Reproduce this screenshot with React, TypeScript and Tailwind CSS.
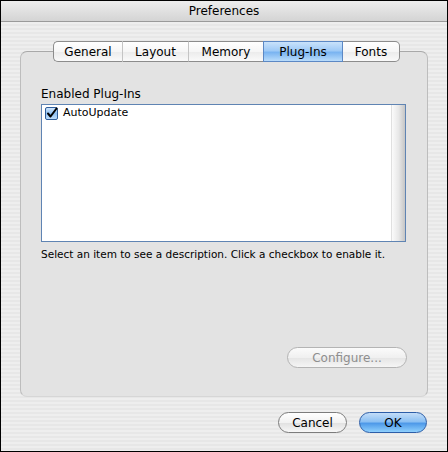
import React from "react";

const font = { fontFamily: '"DejaVu Sans", "Liberation Sans", sans-serif' };

function Tab({ label, w, first, last, active }: { label: string; w: string; first?: boolean; last?: boolean; active?: boolean }) {
  const base = "flex items-center justify-center h-full text-[12px] text-black border-y border-[#8c8c8c] " + w;
  const bg = active
    ? "bg-[linear-gradient(to_bottom,#c9e2fb_0%,#9fcaf6_45%,#7ab4f1_55%,#b9dcfb_100%)] border-y-[#5c88c4]"
    : "bg-[linear-gradient(to_bottom,#ffffff_0%,#f6f6f6_50%,#ececec_55%,#fafafa_100%)]";
  const edges = first
    ? " border-l rounded-l-[5px] border-r border-r-[#c4c4c4]"
    : last
    ? " border-r rounded-r-[5px]"
    : active
    ? " border-r border-r-[#5c88c4] border-l border-l-[#5c88c4] -ml-px"
    : " border-r border-r-[#c4c4c4]";
  return <div className={base + " " + bg + edges}>{label}</div>;
}

function Checkbox() {
  return (
    <svg width="13" height="13" viewBox="0 0 13 13">
      <defs>
        <linearGradient id="cb" x1="0" y1="0" x2="0" y2="1">
          <stop offset="0" stopColor="#d6e9fc" />
          <stop offset="0.5" stopColor="#8fc0f3" />
          <stop offset="1" stopColor="#c2e0fc" />
        </linearGradient>
      </defs>
      <rect x="0.5" y="0.5" width="12" height="12" rx="1.5" fill="url(#cb)" stroke="#2f5d9a" />
      <path d="M3 6.5 L5.5 9.5 L11.5 1.5" fill="none" stroke="#000" strokeWidth="2" strokeLinecap="round" strokeLinejoin="round" />
    </svg>
  );
}

export default function App() {
  return (
    <div className="w-[448px] h-[452px] border border-black flex flex-col overflow-hidden" style={font}>
      <div className="h-[21px] shrink-0 flex items-center justify-center text-[12px] text-black bg-[linear-gradient(to_bottom,#ededed,#d4d4d4)] border-b border-[#9a9a9a]">
        Preferences
      </div>
      <div className="flex-1 flex flex-col px-[19px] pt-[19px] bg-[repeating-linear-gradient(to_bottom,#eeeeee_0px,#eeeeee_2px,#e7e7e7_2px,#e7e7e7_4px)]">
        <div className="relative z-10 h-[21px] flex justify-center pl-[5px]">
          <Tab label="General" w="w-[70px]" first />
          <Tab label="Layout" w="w-[66px]" />
          <Tab label="Memory" w="w-[75px]" />
          <Tab label="Plug-Ins" w="w-[80px]" active />
          <Tab label="Fonts" w="w-[57px]" last />
        </div>
        <div className="-mt-[11px] h-[346px] rounded-[7px] border border-[#a9a9a9] border-b-[#d6d6d6] border-x-[#bdbdbd] bg-[#e3e3e3] flex flex-col pl-[20px] pr-[20px] pt-[34px]">
          <div className="text-[12px] leading-[16px] text-black">Enabled Plug-Ins</div>
          <div className="mt-[2px] w-[365px] h-[138px] border border-[#5f84b3] bg-white flex">
            <div className="flex-1 flex flex-col pl-[3px] pt-[1px]">
              <div className="flex items-center gap-[5px] h-[14px]">
                <Checkbox />
                <span className="text-[11px] text-black">AutoUpdate</span>
              </div>
            </div>
            <div className="w-[14px] h-full bg-[linear-gradient(to_right,#fbfbfb_0%,#e8e8e8_50%,#c6c6c6_100%)] border-l border-[#e0e0e0]" />
          </div>
          <div className="mt-[5px] text-[10.5px] leading-[14px] text-black whitespace-nowrap">
            Select an item to see a description. Click a checkbox to enable it.
          </div>
          <div className="mt-[86px] flex justify-end">
            <div className="w-[120px] h-[21px] rounded-full border border-[#b4b4b4] bg-[linear-gradient(to_bottom,#fbfbfb_0%,#f0f0f0_50%,#e6e6e6_55%,#f5f5f5_100%)] flex items-center justify-center text-[12px] text-[#8e8e8e]">
              Configure...
            </div>
          </div>
        </div>
        <div className="mt-[15px] flex justify-end gap-[12px] pr-[1px]">
          <div className="w-[69px] h-[21px] rounded-full border border-[#7c7c7c] bg-[linear-gradient(to_bottom,#ffffff_0%,#f2f2f2_50%,#e2e2e2_55%,#f7f7f7_100%)] flex items-center justify-center text-[12px] text-black">
            Cancel
          </div>
          <div className="w-[68px] h-[21px] rounded-full border border-[#2d5ea8] bg-[linear-gradient(to_bottom,#c3ddf8_0%,#8cc0f3_45%,#4f9ae9_55%,#8fd0fd_100%)] flex items-center justify-center text-[12px] text-black">
            OK
          </div>
        </div>
      </div>
    </div>
  );
}
